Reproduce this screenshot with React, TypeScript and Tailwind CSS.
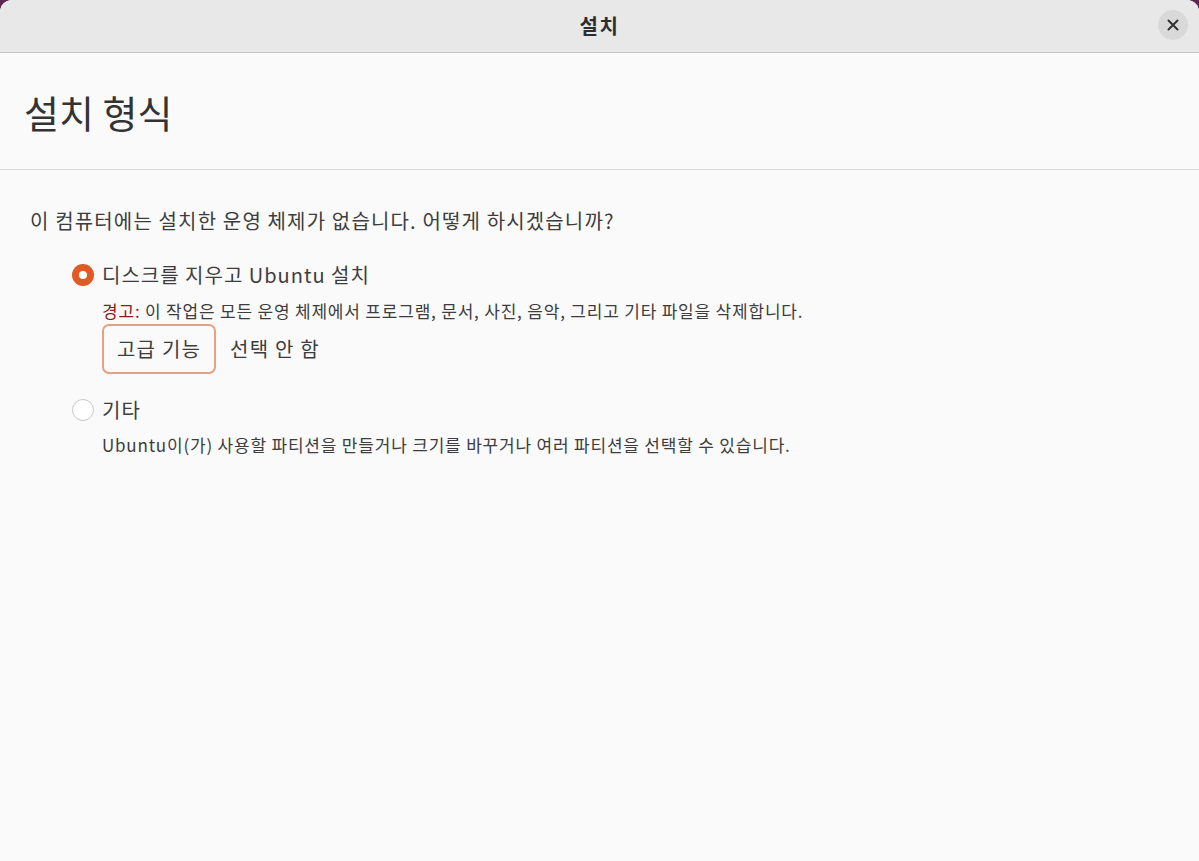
import React from "react";

const font = { fontFamily: "'Noto Sans CJK KR', 'Noto Sans', sans-serif" };

function Radio({ checked }: { checked: boolean }) {
  if (checked) {
    return (
      <span className="flex h-[22px] w-[22px] shrink-0 items-center justify-center rounded-full bg-[#e05a26]">
        <span className="h-[8px] w-[8px] rounded-full bg-white" />
      </span>
    );
  }
  return <span className="h-[22px] w-[22px] shrink-0 rounded-full border border-[#c8c8c8] bg-white" />;
}

export default function App() {
  return (
    <div className="h-[861px] w-[1199px] bg-[#5e2750]" style={font}>
      <div className="flex h-full flex-col overflow-hidden rounded-t-[12px] bg-[#fafafa] text-[#3d3d3d]">
        {/* Title bar */}
        <header className="relative flex h-[53px] shrink-0 items-center justify-center border-b border-[#c4c4c4] bg-[#e8e8e8]">
          <span className="text-[20px] font-bold tracking-[1.5px] text-[#2e2e2e]">설치</span>
          <button className="absolute right-[11px] top-[10px] flex h-[30px] w-[30px] items-center justify-center rounded-full bg-[#d9d9d9]">
            <svg width="12" height="12" viewBox="0 0 12 12">
              <path d="M1.5 1.5 L10.5 10.5 M10.5 1.5 L1.5 10.5" stroke="#333" strokeWidth="2" strokeLinecap="round" />
            </svg>
          </button>
        </header>

        {/* Page heading */}
        <div className="flex h-[117px] shrink-0 items-center border-b border-[#dadada] pl-[24px]">
          <h1 className="text-[38px] font-normal text-[#333]">설치 형식</h1>
        </div>

        {/* Body */}
        <div className="flex flex-col pl-[30px] pt-[37px]">
          <p className="text-[20px] leading-[28px] tracking-[1.15px]">이 컴퓨터에는 설치한 운영 체제가 없습니다. 어떻게 하시겠습니까?</p>

          <div className="mt-[26px] flex flex-col pl-[42px]">
            <label className="flex items-center gap-[8px]">
              <Radio checked />
              <span className="text-[20px] leading-[28px] tracking-[1px]">디스크를 지우고 Ubuntu 설치</span>
            </label>
            <p className="mt-[12px] pl-[30px] text-[17px] leading-[20px] tracking-[0.8px]">
              <span className="text-[#8a1c1c]">경고:</span> 이 작업은 모든 운영 체제에서 프로그램, 문서, 사진, 음악, 그리고 기타 파일을 삭제합니다.
            </p>
            <div className="mt-[3px] flex items-center gap-[14px] pl-[30px]">
              <button className="h-[50px] rounded-[7px] border-2 border-[#e2a283] bg-[#fafafa] px-[13px] text-[20px] tracking-[1.2px]">고급 기능</button>
              <span className="text-[20px] tracking-[1.2px]">선택 안 함</span>
            </div>

            <label className="mt-[22px] flex items-center gap-[8px]">
              <Radio checked={false} />
              <span className="text-[20px] leading-[28px] tracking-[1px]">기타</span>
            </label>
            <p className="mt-[11px] pl-[30px] text-[17px] leading-[20px] tracking-[0.8px]">
              Ubuntu이(가) 사용할 파티션을 만들거나 크기를 바꾸거나 여러 파티션을 선택할 수 있습니다.
            </p>
          </div>
        </div>
      </div>
    </div>
  );
}
